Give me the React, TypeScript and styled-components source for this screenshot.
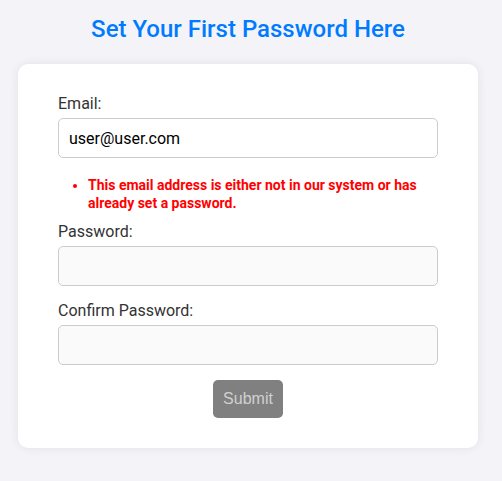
import React from "react";
import styled, { createGlobalStyle } from "styled-components";

const GlobalStyle = createGlobalStyle`
  body {
    margin: 0;
    background: #f4f4f8;
    font-family: Roboto, "Liberation Sans", sans-serif;
  }
`;

const Page = styled.div`
  display: flex;
  flex-direction: column;
  align-items: center;
  width: 496px;
  box-sizing: border-box;
  padding: 0 18px 33px;
`;

const Title = styled.h2`
  margin: 16px 0 22px;
  height: 26px;
  line-height: 26px;
  font-size: 24px;
  font-weight: 500;
  color: #007bff;
`;

const Card = styled.form`
  box-sizing: border-box;
  width: 100%;
  padding: 30px 40px;
  background: #fff;
  border-radius: 10px;
  box-shadow: 0 0 10px rgba(0, 0, 0, 0.08);
  display: flex;
  flex-direction: column;
`;

const Label = styled.label`
  display: block;
  font-size: 16px;
  line-height: 19px;
  color: #333;
  margin-bottom: 5px;
`;

const Field = styled.div<{ $gap?: number }>`
  margin-bottom: ${props => props.$gap ?? 15}px;
`;

const Input = styled.input<{ $filled?: boolean }>`
  box-sizing: border-box;
  display: block;
  width: 100%;
  height: 40px;
  padding: 0 10px;
  border: 1px solid #ccc;
  border-radius: 5px;
  background: ${props => (props.$filled ? "#fff" : "#fafafa")};
  font-family: Roboto, "Liberation Sans", sans-serif;
  font-size: 16px;
  color: #000;
  outline: none;
`;

const ErrorList = styled.ul`
  margin: 0 0 10px;
  padding-left: 30px;
  color: #ff0000;
  font-size: 14px;
  font-weight: 700;
  line-height: 18px;
`;

const SubmitButton = styled.button`
  align-self: center;
  height: 38px;
  padding: 0 10px;
  border: none;
  border-radius: 5px;
  background: #808080;
  color: #d0d0d0;
  font-family: "Liberation Sans", Arial, sans-serif;
  font-size: 16px;
`;

export default function App() {
  return (
    <>
      <GlobalStyle />
      <Page>
        <Title>Set Your First Password Here</Title>
        <Card onSubmit={e => e.preventDefault()}>
          <Field $gap={18}>
            <Label>Email:</Label>
            <Input type="email" defaultValue="user@user.com" $filled />
          </Field>
          <ErrorList>
            <li>This email address is either not in our system or has already set a password.</li>
          </ErrorList>
          <Field>
            <Label>Password:</Label>
            <Input type="password" />
          </Field>
          <Field>
            <Label>Confirm Password:</Label>
            <Input type="password" />
          </Field>
          <SubmitButton type="submit" disabled>Submit</SubmitButton>
        </Card>
      </Page>
    </>
  );
}
